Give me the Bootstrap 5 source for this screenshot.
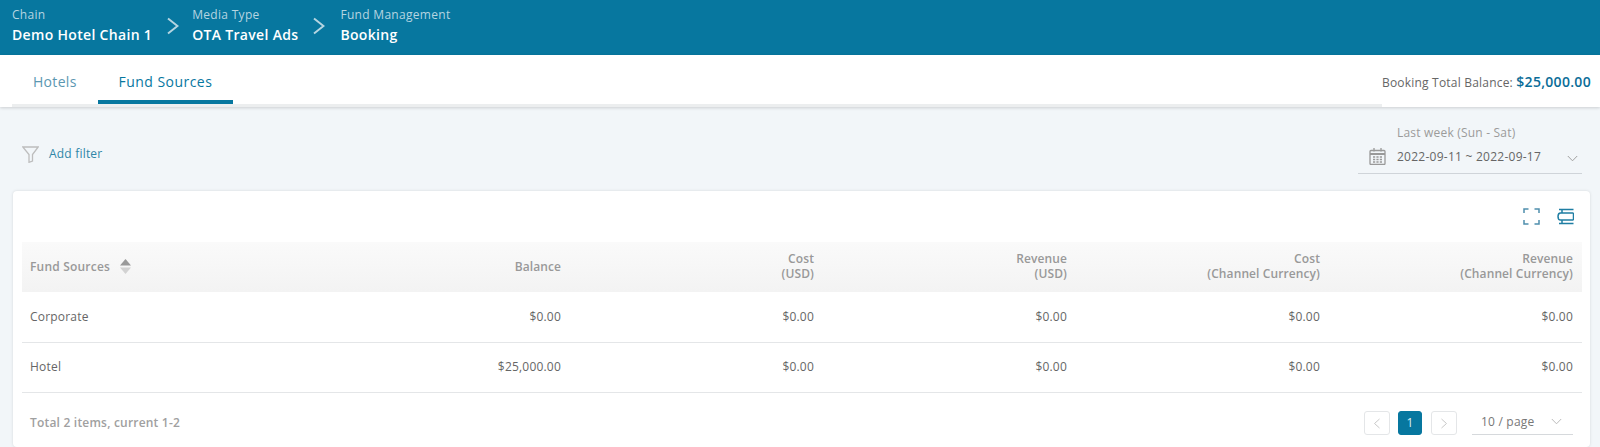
<!DOCTYPE html>
<html lang="en"><head><meta charset="utf-8">
<title>Fund Sources</title>
<link href="https://cdn.jsdelivr.net/npm/bootstrap@5.3.0/dist/css/bootstrap.min.css" rel="stylesheet">
<style>
html,body{height:447px;overflow:hidden}
body{font-family:"Open Sans","Liberation Sans",sans-serif;font-size:12px;letter-spacing:.2px;color:#666;background:#f2f6f9}
.topbar{height:55px;background:#07779f;padding:7px 12px 0;color:#fff}
.crumb-label{font-size:12px;line-height:16px;color:#b5d5e1;letter-spacing:.3px}
.crumb-value{font-size:14px;line-height:23px;font-weight:600;color:#fff;letter-spacing:.32px}
.crumb-sep{width:42px;height:36px;padding-left:15px;padding-top:10px}
.crumb-sep.first-sep{width:40px}
.crumb-sep svg{display:block}
.tabbar{height:52px;background:#fff;box-shadow:0 1px 3px rgba(0,0,0,.16)}
.tabs-wrap{width:1370px;margin-left:12px;border-bottom:3px solid #eceeef;height:52px;flex:none}
.tab-item{font-size:14px;letter-spacing:.3px;line-height:20px;padding:17px 21px 0;height:49px;color:#5b97b1}
.tab-item.on{color:#07779f;border-bottom:4px solid #07779f;font-weight:500;letter-spacing:.45px}
.total-bal{flex:none;padding-left:0;padding-top:15px;line-height:24px;color:#666;white-space:nowrap}
.total-bal b{font-size:14px;font-weight:600;color:#0a6d98;letter-spacing:.3px}
.filterbar{height:84px;padding:0 18px 0 22px}
.add-box{margin-top:38px;height:18px}
.add-link{color:#2f86a8;font-size:12px}
.funnel{margin-right:10px;display:block}
.date-box{width:224px;margin-top:15px;border-bottom:1px solid #cfd4d9;height:52px;position:relative;padding:2px 0 0 39px}
.date-label{color:#9b9b9b;line-height:17px;margin-bottom:7px}
.date-val{color:#666;line-height:17px;letter-spacing:.25px}
.date-ico{position:absolute;left:11px;top:26px}
.date-car{position:absolute;right:4px;top:33px}
.panel{margin:0 10px 0 13px;background:#fff;border-radius:4px;box-shadow:0 0 3px rgba(0,0,0,.13);padding:0 8px 0 9px;height:256px}
.tools{height:51px;padding:17px 8px 0 0;gap:17px}
.tools svg{display:block}
.tbl{margin:0;table-layout:fixed;width:1560px;font-size:12px}
.tbl th{background:linear-gradient(#fafafa,#f3f3f3);color:#999;font-weight:600;height:50px;padding:0 9px 2px;vertical-align:middle;border:0;line-height:15px;box-shadow:none;letter-spacing:.1px}
.tbl td{height:50px;padding:0 9px;vertical-align:middle;border-bottom:1px solid #e4e6e8;color:#666;background:#fff;box-shadow:none}
.tbl .c1{width:295px;padding-left:8px}
.tbl th.c1{letter-spacing:.2px}
.tbl .cn{width:253px}
.sorter{display:inline-block;vertical-align:-3px;margin-left:7px;width:11px}
.sorter svg{display:block}
.foot{height:55px;padding:6px 9px 0 8px;color:#a0a0a0;font-weight:600}
.pg{width:26px;height:24px;border:1px solid #e4e6e8;border-radius:3px;display:flex;align-items:center;justify-content:center;background:#fff}
.pg.cur{background:#07779f;border-color:#07779f;color:#dfeef4;width:24px;margin:0 9px 0 8px;font-weight:400}
.size-sel{width:101px;margin-left:15px;border-bottom:1px solid #d6d9dc;height:24px;color:#777;padding:2px 0 0 9px;position:relative;line-height:18px;font-weight:400}
.size-sel svg{position:absolute;right:11px;top:7px}
</style></head>
<body>
<div class="topbar d-flex">
  <div><div class="crumb-label">Chain</div><div class="crumb-value">Demo Hotel Chain 1</div></div>
  <div class="crumb-sep first-sep"><svg width="12" height="18" viewBox="0 0 12 18" fill="none" stroke="#b5d5e1" stroke-width="2"><path d="M1 1.500 10.500 9 1 16.500"/></svg></div>
  <div><div class="crumb-label">Media Type</div><div class="crumb-value">OTA Travel Ads</div></div>
  <div class="crumb-sep"><svg width="12" height="18" viewBox="0 0 12 18" fill="none" stroke="#b5d5e1" stroke-width="2"><path d="M1 1.500 10.500 9 1 16.500"/></svg></div>
  <div><div class="crumb-label">Fund Management</div><div class="crumb-value">Booking</div></div>
</div>
<div class="tabbar d-flex">
  <div class="tabs-wrap d-flex">
    <div class="tab-item">Hotels</div>
    <div class="tab-item on">Fund Sources</div>
  </div>
  <div class="total-bal">Booking Total Balance: <b>$25,000.00</b></div>
</div>
<div class="filterbar d-flex justify-content-between align-items-start">
  <div class="add-box d-flex align-items-center">
    <svg class="funnel" width="17" height="17" viewBox="0 0 17 17" fill="none" stroke="#bdbdbd" stroke-width="1.300"><path d="M.8 1h15.400L10.500 8.500V15L7 16.300V8.500z"/></svg>
    <span class="add-link">Add filter</span>
  </div>
  <div class="date-box">
    <svg class="date-ico" width="17" height="17" viewBox="0 0 17 17" fill="none" stroke="#999" stroke-width="1.300"><rect x="1" y="2.500" width="15" height="14" rx="1"/><path d="M1 6h15" stroke-width="2"/><path d="M5 0v3.500M12 0v3.500"/><path d="M4 9h2.200M7.400 9h2.200M10.800 9H13M4 11.500h2.200M7.400 11.500h2.200M10.800 11.500H13M4 14h2.200M7.400 14h2.200M10.800 14H13" stroke-width="1.400"/></svg>
    <div class="date-label">Last week (Sun - Sat)</div>
    <div class="date-val">2022-09-11 ~ 2022-09-17</div>
    <svg class="date-car" width="11" height="7" viewBox="0 0 11 7" fill="none" stroke="#a0a0a0"><path d="M.8 1 5.500 5.800 10.200 1"/></svg>
  </div>
</div>
<div class="panel">
  <div class="tools d-flex justify-content-end">
    <svg width="17" height="17" viewBox="0 0 17 17" fill="none" stroke="#4f8fad" stroke-width="1.500"><path d="M1 5V1h4.500M11.500 1H16v4M16 12v4h-4.500M5.500 16H1v-4"/></svg>
    <svg width="17" height="17" viewBox="0 0 17 17" fill="none" stroke="#1f7ea3" stroke-width="1.500"><path d="M2 1.500h14.500M5 1.500V5M16.500 5H3.500c-3.300 0-3.300 7 0 7h13M16.500 5v7M5 12v3.500M2 15.500h14.500"/></svg>
  </div>
  <table class="table tbl">
    <thead><tr>
      <th class="c1">Fund Sources <span class="sorter"><svg width="11" height="15" viewBox="0 0 11 15"><path d="M5.500 0 11 6.500H0z" fill="#9a9a9a"/><path d="M5.500 15 11 8.500H0z" fill="#d2d2d2"/></svg></span></th>
      <th class="cn text-end">Balance</th>
      <th class="cn text-end">Cost<br>(USD)</th>
      <th class="cn text-end">Revenue<br>(USD)</th>
      <th class="cn text-end">Cost<br>(Channel Currency)</th>
      <th class="cn text-end">Revenue<br>(Channel Currency)</th>
    </tr></thead>
    <tbody>
      <tr><td class="c1">Corporate</td><td class="text-end">$0.00</td><td class="text-end">$0.00</td><td class="text-end">$0.00</td><td class="text-end">$0.00</td><td class="text-end">$0.00</td></tr>
      <tr><td class="c1">Hotel</td><td class="text-end">$25,000.00</td><td class="text-end">$0.00</td><td class="text-end">$0.00</td><td class="text-end">$0.00</td><td class="text-end">$0.00</td></tr>
    </tbody>
  </table>
  <div class="foot d-flex justify-content-between align-items-center">
    <div>Total 2 items, current 1-2</div>
    <div class="d-flex align-items-center">
      <div class="pg"><svg width="8" height="11" viewBox="0 0 8 11" fill="none" stroke="#c9c9c9"><path d="M6.500 1 1.500 5.500 6.500 10"/></svg></div>
      <div class="pg cur">1</div>
      <div class="pg"><svg width="8" height="11" viewBox="0 0 8 11" fill="none" stroke="#c9c9c9"><path d="M1.500 1 6.500 5.500 1.500 10"/></svg></div>
      <div class="size-sel">10 / page<svg width="11" height="7" viewBox="0 0 11 7" fill="none" stroke="#bbb"><path d="M.8 1 5.500 5.800 10.200 1"/></svg></div>
    </div>
  </div>
</div>
<script src="https://cdn.jsdelivr.net/npm/bootstrap@5.3.0/dist/js/bootstrap.bundle.min.js"></script>
</body></html>
